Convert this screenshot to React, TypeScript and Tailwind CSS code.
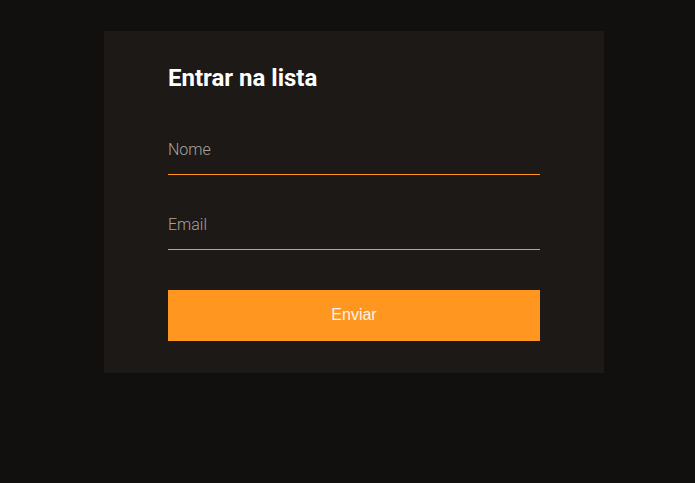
export default function App() {
  return (
    <div className="min-h-screen bg-[#12100e] pl-[104px] pt-[31px] font-['Roboto',sans-serif]">
      <div className="w-[500px] bg-[#1c1917] px-16 pt-[31px] pb-8">
        <h1 className="text-[24px] leading-8 font-bold text-white">Entrar na lista</h1>
        <form className="mt-8 flex flex-col" onSubmit={(e) => e.preventDefault()}>
          <input
            type="text"
            placeholder="Nome"
            className="h-[49px] w-full border-b border-[#ff9620] bg-transparent pb-[2px] text-base font-light text-white outline-none placeholder:text-[#a8a29e]"
          />
          <input
            type="email"
            placeholder="Email"
            className="mt-[26px] h-[49px] w-full border-b border-[#ff9620] bg-transparent pb-[2px] text-base font-light text-white outline-none placeholder:text-[#a8a29e]"
          />
          <button
            type="submit"
            className="mt-10 h-[51px] w-full bg-[#ff9620] pb-[2px] font-['Liberation_Sans',sans-serif] text-base text-[#f7f3ee]"
          >
            Enviar
          </button>
        </form>
      </div>
    </div>
  );
}
